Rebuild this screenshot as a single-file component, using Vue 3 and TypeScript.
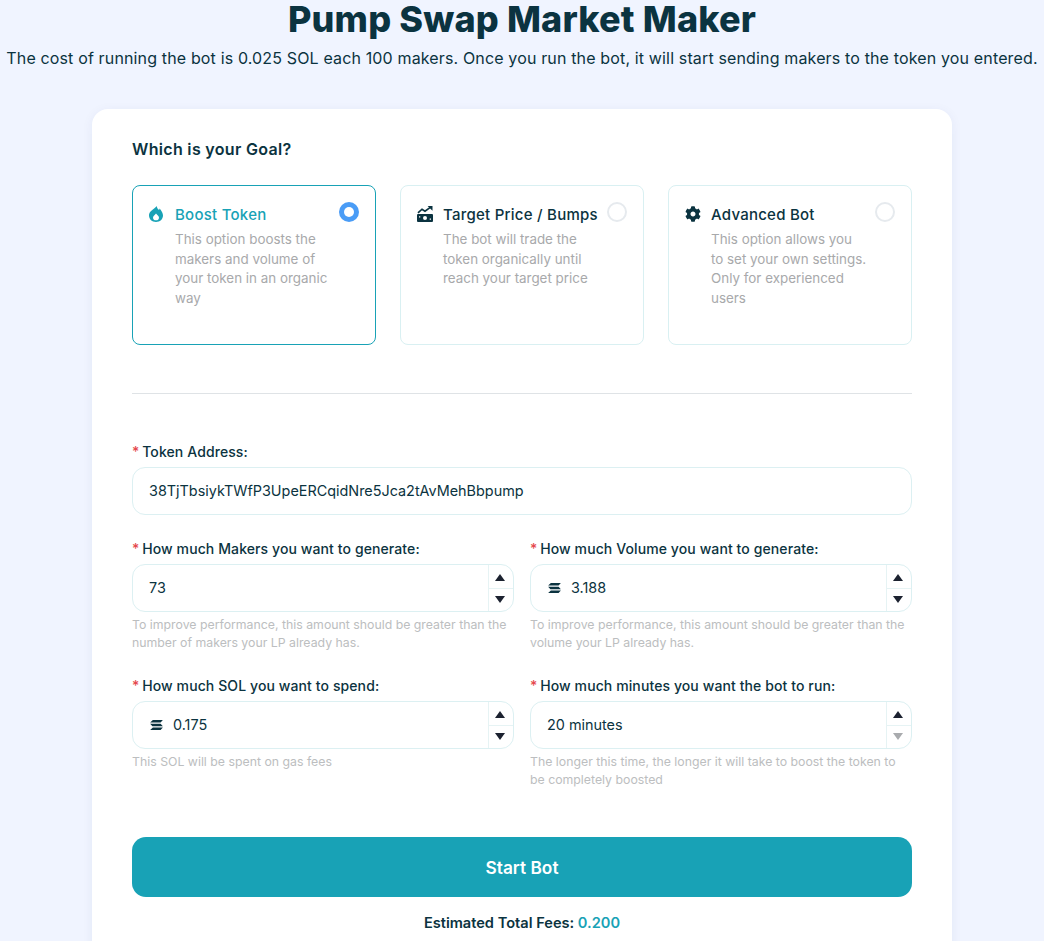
<script setup lang="ts">
const goals = [
  { t: 'Boost Token', d: ['This option boosts the', 'makers and volume of', 'your token in an organic', 'way'], icon: 'fire', on: true },
  { t: 'Target Price / Bumps', d: ['The bot will trade the', 'token organically until', 'reach your target price'], icon: 'chart', on: false },
  { t: 'Advanced Bot', d: ['This option allows you', 'to set your own settings.', 'Only for experienced', 'users'], icon: 'gear', on: false },
]
</script>

<template>
  <div class="page">
    <h1>Pump Swap Market Maker</h1>
    <p class="sub">The cost of running the bot is 0.025 SOL each 100 makers. Once you run the bot, it will start sending makers to the token you entered.</p>
    <main class="card">
      <h2>Which is your Goal?</h2>
      <div class="goals">
        <div v-for="g in goals" :key="g.t" class="goal" :class="{ on: g.on }">
          <span class="gbox">
            <svg v-if="g.icon === 'fire'" class="fire" viewBox="0 0 14 16"><path fill="#18a2b6" fill-rule="evenodd" d="M7.600 0C8 2 9 3 10 4c.4-.6.6-1 .7-1.600C12.800 5 14 7.200 14 9.500 14 13.200 10.900 16 7 16S0 13.200 0 9.500C0 6 2.800 4.500 4.500 3 5.800 2 7 1.200 7.600 0ZM7 7.500C6 9 4 10 4 11.700 4 13.300 5.300 14.300 7 14.300s3-1 3-2.600C10 10 8 9 7 7.500Z"/></svg>
            <svg v-else-if="g.icon === 'chart'" class="chart" viewBox="0 0 16 16"><path fill="#0b3340" fill-rule="evenodd" d="M1 8h14a1 1 0 0 1 1 1v6a1 1 0 0 1-1 1H1a1 1 0 0 1-1-1V9a1 1 0 0 1 1-1Zm7 2a2 2 0 1 0 0 4 2 2 0 0 0 0-4ZM2 10.200v1.300h1.300v-1.300Zm10.700 2.300v1.300H14v-1.300Z"/><path fill="none" stroke="#0b3340" stroke-width="1.700" d="M1 6.800 5 3.200l3 2 5.300-3.800"/><path fill="#0b3340" d="M10.600 0H15.500V4.700Z"/></svg>
            <svg v-else class="gear" viewBox="0 0 512 512"><path fill="#0b3340" d="M487.400 315.700l-42.600-24.600c4.300-23.200 4.300-47 0-70.200l42.600-24.600c4.900-2.800 7.100-8.600 5.500-14-11.100-35.600-30-67.800-54.700-94.600-3.800-4.100-10-5.100-14.800-2.300L380.800 110c-17.900-15.400-38.500-27.300-60.800-35.100V25.800c0-5.600-3.900-10.500-9.400-11.700-36.700-8.200-74.300-7.800-109.200 0-5.500 1.200-9.400 6.100-9.400 11.700V75c-22.200 7.900-42.800 19.800-60.800 35.100L88.700 85.500c-4.900-2.800-11-1.900-14.800 2.300-24.700 26.700-43.600 58.900-54.700 94.600-1.700 5.400.6 11.200 5.500 14L67.300 221c-4.300 23.200-4.300 47 0 70.200l-42.600 24.600c-4.900 2.800-7.100 8.600-5.500 14 11.100 35.600 30 67.800 54.700 94.600 3.800 4.100 10 5.100 14.800 2.300l42.600-24.600c17.900 15.400 38.500 27.300 60.800 35.100v49.200c0 5.600 3.900 10.500 9.400 11.700 36.700 8.200 74.300 7.800 109.200 0 5.500-1.200 9.400-6.100 9.400-11.700v-49.200c22.200-7.900 42.800-19.800 60.800-35.100l42.600 24.600c4.900 2.800 11 1.900 14.800-2.300 24.700-26.700 43.600-58.900 54.700-94.600 1.500-5.500-.7-11.300-5.600-14.100zM256 336c-44.100 0-80-35.900-80-80s35.900-80 80-80 80 35.900 80 80-35.900 80-80 80z"/></svg>
          </span>
          <div class="gt">
            <div class="gn">{{ g.t }}</div>
            <div class="gd"><div v-for="l in g.d" :key="l">{{ l }}</div></div>
          </div>
          <span class="radio"></span>
        </div>
      </div>
      <hr />
      <label class="lb"><i>*</i> Token Address:</label>
      <div class="input full">38TjTbsiykTWfP3UpeERCqidNre5Jca2tAvMehBbpump</div>
      <div class="grid">
        <div class="f">
          <label class="lb"><i>*</i> How much Makers you want to generate:</label>
          <div class="input"><span>73</span><span class="steps"><b class="up"></b><b class="dn"></b></span></div>
          <p class="hint">To improve performance, this amount should be greater than the number of makers your LP already has.</p>
        </div>
        <div class="f">
          <label class="lb"><i>*</i> How much Volume you want to generate:</label>
          <div class="input"><svg class="sol" viewBox="0 0 14 11"><path fill="#0b3340" d="M3 0H14l-2.500 2.800H0ZM0 4.100h11.500L14 6.900H2.500ZM3 8.200H14L11.500 11H0Z"/></svg><span>3.188</span><span class="steps"><b class="up"></b><b class="dn"></b></span></div>
          <p class="hint">To improve performance, this amount should be greater than the volume your LP already has.</p>
        </div>
        <div class="f">
          <label class="lb"><i>*</i> How much SOL you want to spend:</label>
          <div class="input"><svg class="sol" viewBox="0 0 14 11"><path fill="#0b3340" d="M3 0H14l-2.500 2.800H0ZM0 4.100h11.500L14 6.900H2.500ZM3 8.200H14L11.500 11H0Z"/></svg><span>0.175</span><span class="steps"><b class="up"></b><b class="dn"></b></span></div>
          <p class="hint">This SOL will be spent on gas fees</p>
        </div>
        <div class="f">
          <label class="lb"><i>*</i> How much minutes you want the bot to run:</label>
          <div class="input"><span>20 minutes</span><span class="steps"><b class="up"></b><b class="dn off"></b></span></div>
          <p class="hint">The longer this time, the longer it will take to boost the token to be completely boosted</p>
        </div>
      </div>
      <button class="start">Start Bot</button>
      <div class="fees">Estimated Total Fees: <em>0.200</em></div>
    </main>
  </div>
</template>

<style>
html, body { margin: 0; background: #f0f4ff; }
</style>

<style scoped>
.page { height: 941px; overflow: hidden; background: #f0f4ff; font-family: "Inter", "Noto Sans", sans-serif; color: #0b3340; text-align: center; }
h1 { margin: 0; font: 800 36px/38px "Inter", sans-serif; letter-spacing: .18px; }
.sub { margin: 8px 0 0; font-size: 16px; line-height: 24px; white-space: nowrap; letter-spacing: .147px; }
.card { width: 780px; margin: 39px auto 0; padding: 28px 40px 40px; background: #fff; border-radius: 16px; text-align: left; box-shadow: 0 2px 12px rgba(30,50,120,.06); }
h2 { margin: 0 0 24px; font-size: 16px; line-height: 24px; font-weight: 600; letter-spacing: .32px; }
.goals { display: grid; grid-template-columns: repeat(3, 244px); gap: 24px; }
.goal { height: 160px; box-sizing: border-box; border: 1px solid #d9f0f2; border-radius: 8px; padding: 18px 16px; display: flex; position: relative; }
.goal.on { border-color: #18a2b6; }
.gbox { width: 16px; height: 16px; margin: 2px 10px 0 0; flex: none; display: flex; }
.fire { width: 14px; height: 16px; }
.chart, .gear { width: 16px; height: 16px; }
.gn { font-size: 15px; line-height: 22px; font-weight: 500; letter-spacing: .25px; }
.on .gn { color: #18a2b6; }
.gd { margin-top: 4px; font-size: 13.4px; line-height: 19.7px; color: #a8a9ab; white-space: nowrap; }
.radio { position: absolute; right: 16px; top: 16px; width: 20px; height: 20px; box-sizing: border-box; border: 2px solid #e6eaee; border-radius: 50%; }
.on .radio { border: 0; background: #4a9cf6; }
.on .radio::after { content: ""; position: absolute; inset: 5px; background: #fff; border-radius: 50%; }
hr { border: 0; border-top: 1px solid #dfe3e6; margin: 48px 0 47px; }
.lb { display: block; font-size: 14px; line-height: 22px; font-weight: 500; margin-bottom: 4px; letter-spacing: .1px; }
.lb i { color: #e5484d; font-style: normal; margin-right: -1px; }
.input { height: 48px; box-sizing: border-box; border: 1px solid #dcf0f2; border-radius: 13px; display: flex; align-items: center; padding: 0 16px 2px; font-size: 14.4px; position: relative; }
.full { margin-bottom: 23px; }
.grid { display: grid; grid-template-columns: 382px 382px; column-gap: 16px; row-gap: 19px; }
.hint { margin: 4px 0 0; min-height: 40px; font-size: 12.3px; line-height: 18px; color: #bcbec0; }
.sol { width: 13px; height: 10px; margin: 2px 10px 0 1px; }
.steps { position: absolute; right: 0; top: 0; bottom: 0; width: 24px; border-left: 1px solid #e6f3f4; display: flex; flex-direction: column; }
.steps b { flex: 1; position: relative; }
.steps b + b { border-top: 1px solid #e6f3f4; }
.steps b::after { content: ""; position: absolute; left: 6px; border-left: 5.500px solid transparent; border-right: 5.500px solid transparent; }
.up::after { top: 9px; border-bottom: 7px solid #1c2230; }
.dn::after { top: 7px; border-top: 7px solid #1c2230; }
.dn.off::after { border-top-color: #a9abae; }
.start { display: block; width: 100%; height: 60px; margin-top: 44px; border: 0; border-radius: 14px; background: #18a2b6; color: #fff; font: 600 17.3px "Inter", sans-serif; }
.fees { margin-top: 16px; text-align: center; font-size: 14.6px; line-height: 20px; font-weight: 600; }
.fees em { font-style: normal; color: #18a2b6; }
</style>
